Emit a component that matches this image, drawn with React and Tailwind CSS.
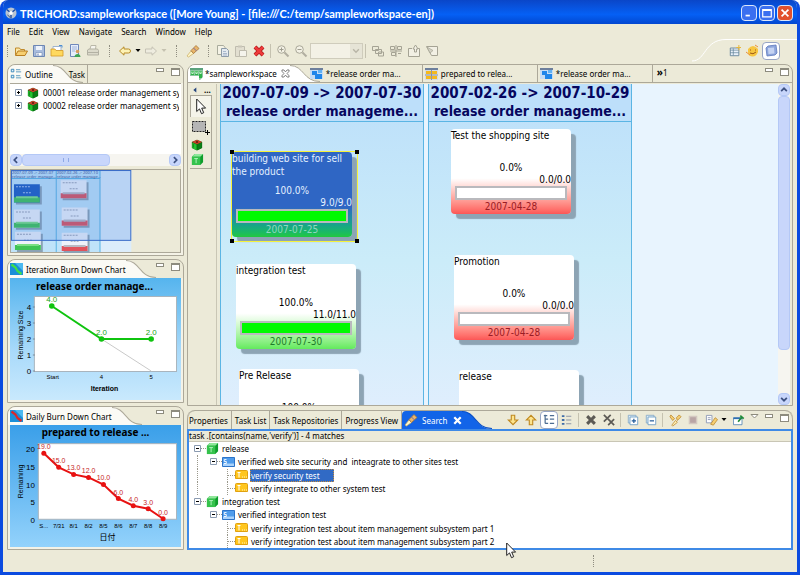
import { useState } from "react";
import clsx from "clsx";

/* ---------- small icons ---------- */

function Svg({ s = 14, children, className, vb = "0 0 14 14" }) {
  return (
    <svg width={s} height={s} viewBox={vb} fill="none" className={clsx("shrink-0", className)} aria-hidden="true">
      {children}
    </svg>
  );
}

const Folder = () => (
  <Svg>
    <path d="M1.500 11V4h4l1 1.500h4V7" fill="#fbe7a6" stroke="#c08a2c" />
    <path d="M1.500 11.500 4 7h9.500L11 11.500Z" fill="#f7cf70" stroke="#b97f22" />
  </Svg>
);
const Save = () => (
  <Svg>
    <path d="M1.500 1.500h11v11h-11z" fill="#a9bcdc" stroke="#6c86b4" />
    <path d="M4 2h6v4H4z" fill="#eef3fb" />
    <path d="M4 8.500h6V12H4z" fill="#fff" stroke="#6c86b4" strokeWidth=".6" />
    <path d="M6 9.500v2" stroke="#5672a6" />
  </Svg>
);
const OpenFile = () => (
  <Svg>
    <path d="M3 2.500h8V7H3z" fill="#fff" stroke="#9eb3cf" />
    <path d="M1 5h4l1 1.500h7V12H1z" fill="#ffd95e" stroke="#d69a24" strokeWidth=".8" />
    <path d="M9 1.500h3v2" stroke="#4a8fd6" />
  </Svg>
);
const DocUser = () => (
  <Svg>
    <path d="M2.500.500h8v12h-8z" fill="#e6edfa" stroke="#6f88bb" />
    <path d="M4 3h5M4 5h5M4 7h3" stroke="#8ea5d3" strokeWidth=".8" />
    <circle cx="9.500" cy="7.500" r="1.800" fill="#d99c5c" />
    <path d="M6.500 13c0-4 6-4 6 0Z" fill="#3fa453" />
  </Svg>
);
const Printer = () => (
  <Svg>
    <path d="M4 5 5 1.500h5L9.500 5" fill="#f6f5ee" stroke="#b9b7a8" />
    <path d="M1.500 6 3 5h8.500l1 1.500V11h-11z" fill="#dcdacb" stroke="#b3b1a3" />
    <path d="M2 8.500h10" stroke="#b3b1a3" />
  </Svg>
);
const Back = () => (
  <Svg>
    <path d="M1.500 7 6 2.800V5h4.500q2 0 2 2t-2 2H6v2.200Z" fill="#fdf2b4" stroke="#b78b28" />
  </Svg>
);
const Forward = () => (
  <Svg>
    <path d="M12.500 7 8 2.800V5H1.500v4H8v2.200Z" fill="#eeecdf" stroke="#c5c2b4" />
  </Svg>
);
const Torch = () => (
  <Svg>
    <path d="m1 12 4-5 2.500 2.500-5 3.500Z" fill="#fff7c7" stroke="#c8aa60" strokeWidth=".7" />
    <path d="m5 6.500 5-5 3 3-5.500 5Z" fill="#e9b66a" stroke="#a57438" strokeWidth=".8" />
    <path d="m7.500 4 2.800 2.800" stroke="#7a6aa8" />
  </Svg>
);
const Copy = () => (
  <Svg>
    <path d="M1.500 1.500h6l1.500 2v7H1.500z" fill="#f5f3e6" stroke="#a9ab9c" />
    <path d="M5.500 4.500h5l2 2v6h-7z" fill="#e4eaf0" stroke="#8c9aa8" />
    <path d="M7 7.500h3M7 9.500h4M7 11h4" stroke="#8fa2bd" strokeWidth=".7" />
  </Svg>
);
const Paste = () => (
  <Svg>
    <path d="M1.500 2.500h9v10h-9z" fill="#e2dfd0" stroke="#bfbcae" />
    <path d="M4 1.500h4v2H4z" fill="#c9c6b8" />
    <path d="M5.500 6.500h7v6h-7z" fill="#f5f4ec" stroke="#bfbcae" />
  </Svg>
);
const RedX = () => (
  <Svg>
    <path d="m3 3 8 8m0-8-8 8" stroke="#a81818" strokeWidth="4" />
    <path d="m3 3 8 8m0-8-8 8" stroke="#ee3a3a" strokeWidth="2.600" />
  </Svg>
);
const Zoomer = ({ plus }) => (
  <Svg>
    <circle cx="5.500" cy="5.500" r="3.800" fill="#f3f1e5" stroke="#a9a798" />
    <path d={plus ? "M3.500 5.500h4m-2-2v4" : "M3.500 5.500h4"} stroke="#a09e90" />
    <path d="m8.500 8.500 4 4" stroke="#b1aea0" strokeWidth="2" />
  </Svg>
);
const Layers = () => (
  <Svg>
    <path d="M1.500 2.500h6v4h-6zM4.500 5.500h6v4h-6zM7.500 8h5v4h-5z" fill="#ecead8" stroke="#a5a394" />
  </Svg>
);
const Arrange = () => (
  <Svg>
    <path d="M1.500 2.500h4v3h-4zM8.500 2.500h4v3h-4zM2.500 8.500h4v3h-4zM7 1v12M1 7h12M9 9.500h3" stroke="#a5a394" />
  </Svg>
);
const Inbox = () => (
  <Svg>
    <path d="M5 4.500H1.500v8h11v-8H11" fill="#f2f0e4" stroke="#a5a394" />
    <path d="M7.500 8V5H6l2.500-4L11 5H9.500v3Z" fill="#f2f0e4" stroke="#a5a394" />
  </Svg>
);
const Note = () => (
  <Svg>
    <path d="M1.500 2.500h11v9h-6z" fill="#f2f0e4" stroke="#a5a394" />
    <path d="m2 3 3 6 3-2.500Z" fill="#d4d2c4" stroke="#a5a394" strokeWidth=".7" />
  </Svg>
);

const Cube = ({ s = 12 }) => (
  <Svg s={s}>
    <path d="m7 1 6 2.500v7L7 13.500l-6-3v-7Z" fill="#0a6d12" />
    <path d="M7 1 13 3.500 7 6 1 3.500Z" fill="#c8412a" />
    <path d="m1.500 4.500 5 2v6.500l-5-2.500Z" fill="#25c431" />
    <path d="m7.500 6.500 5-2v6l-5 2.500Z" fill="#0a7d16" />
    <circle cx="7" cy="3.500" r="1.300" fill="#5d1f12" />
    <path d="M3 6v4" stroke="#127d1c" />
  </Svg>
);
const GreenBox = ({ s = 13 }) => (
  <Svg s={s}>
    <path d="m1 4 3-3h9v9l-3 3H1Z" fill="#0f9d2c" />
    <path d="m1 4 3-3h9l-3 3Z" fill="#8fe79a" />
    <path d="M1 4h9v9H1z" fill="#35c24c" />
    <path d="M3.500 6h4m-2 0v5" stroke="#b4f5bf" />
  </Svg>
);
const StoryIcon = () => (
  <svg width="13" height="10" viewBox="0 0 13 10" className="shrink-0" aria-hidden="true">
    <path d="M.500.500h12v9H.500z" fill="#4f9cec" stroke="#2d74c9" />
    <path d="M5 6.500h7V9H1V6.500Z" fill="#a9d2fb" />
    <path d="M4.500 2.500H2.300v2h2v2H2" fill="none" stroke="#fff" strokeWidth=".9" />
  </svg>
);
const TaskIcon = () => (
  <svg width="13" height="10" viewBox="0 0 13 10" className="shrink-0" aria-hidden="true">
    <path d="M.500 1.500q0-1 1-1h10q1 0 1 1v7h-12Z" fill="#ffc61e" stroke="#e0a110" />
    <path d="M2.500 2.500h3M4 2.500v5" stroke="#fff" />
    <path d="M7 7h1m1 0h1m1 0h1" stroke="#fff3bf" />
  </svg>
);
const BoardIcon = () => (
  <svg width="13" height="12" viewBox="0 0 13 12" className="shrink-0" aria-hidden="true">
    <path d="M0 0h13v9l-3 3H9V8H0z" fill="#8cc6a0" />
    <path d="M0 0h13v2H0z" fill="#5aa27c" />
    <path d="M1 3h3v4H1zM5 3h3v4H5zM9 3h3v7H9z" fill="#2eb348" />
    <path d="M1.800 3.500v2h1.400v-2M5.800 3.500v2h1.400v-2M9.800 3.500v2h1.400v-2" stroke="#e4ffe9" strokeWidth=".8" fill="none" />
  </svg>
);
const BlueBoard = () => (
  <svg width="13" height="12" viewBox="0 0 13 12" className="shrink-0" aria-hidden="true">
    <path d="M0 0h13v2H0z" fill="#6d7f9c" />
    <path d="M0 2h13v9H0z" fill="#c4dcf5" />
    <path d="M2 3h5v4H2zM5 6h7v5H5z" fill="#1f86ea" />
    <path d="M8 2h4v3H8z" fill="#60b1f5" />
  </svg>
);
const YellowBoard = () => (
  <svg width="13" height="12" viewBox="0 0 13 12" className="shrink-0" aria-hidden="true">
    <path d="M0 0h13v2H0z" fill="#6d7f9c" />
    <path d="M0 2h13v10H0z" fill="#d5dbe4" />
    <path d="M1 3h5v3H1zM7 3h5v3H7zM1 8h5v3H1zM7 8h5v3H7z" fill="#f5b91d" />
    <path d="M6.500 2v10M0 7h13" stroke="#7d8794" strokeWidth=".8" />
  </svg>
);
const OutlineIcon = () => (
  <Svg s={12}>
    <path d="M1.500 1.500h3v3h-3zM1.500 8.500h3v3h-3z" fill="#dff0fb" stroke="#2c7fb4" />
    <path d="M7 2h5M7 4.500h6M7 9h5M7 11.500h6" stroke="#4a8fb8" />
  </Svg>
);
const BurnIcon = ({ line }) => (
  <svg width="13" height="12" viewBox="0 0 13 12" className="shrink-0" aria-hidden="true">
    <path d="M0 0h13v12H0z" fill="#1a8fd8" />
    <path d="M5 0h8v8Z" fill="#4cb9f0" />
    <path d="m1.500 1.500 4 3 2 3.500 4 3" fill="none" stroke={line} strokeWidth="2.200" />
  </svg>
);
const MinMax = () => (
  <div className="flex items-start gap-[7px] pr-[3px] pt-[3px]">
    <button aria-label="Minimize view" className="h-1 w-2 border border-[#8d8b7e] bg-white" />
    <button aria-label="Maximize view" className="h-2 w-[9px] border border-t-2 border-[#8d8b7e] bg-white" />
  </div>
);

/* ---------- chrome ---------- */

function Curve({ from = "#ffffff", stroke = "#aca899" }) {
  return (
    <svg width="30" height="17" viewBox="0 0 30 17" preserveAspectRatio="none" className="h-full w-[30px] shrink-0" aria-hidden="true">
      <path d="M0 0C14 0 13 17 30 17H0Z" fill={from} />
      <path d="M0 .5C14 .5 13 16.500 30 16.500" fill="none" stroke={stroke} />
    </svg>
  );
}

function Panel({ icon, title, extra, children, className }) {
  return (
    <section className={clsx("flex min-h-0 flex-col rounded-t-lg border border-[#aca899]", className)}>
      <div className="flex h-[18px] shrink-0 items-stretch justify-between">
        <div className="flex items-stretch">
          <h2 className="flex items-center gap-[3px] rounded-tl-lg bg-[#fbfaf5] pl-0.5 whitespace-nowrap">
            {icon}
            {title}
          </h2>
          <Curve from="#fbfaf5" />
          {extra}
        </div>
        <MinMax />
      </div>
      <div className="flex min-h-0 flex-1 flex-col border-2 border-t-0 border-[#f4f2e6]">{children}</div>
    </section>
  );
}

const Handle = ({ className }) => (
  <span className={clsx("flex shrink-0 justify-center", className)}>
    <span className="h-3 border-l border-dotted border-[#8f8d80]" />
  </span>
);
const Sep = () => <span className="mr-[3px] ml-0.5 h-3.5 w-px shrink-0 bg-[#c5c2b0]" />;
const Drop = ({ dim, className }) => (
  <svg width="8" height="4" viewBox="0 0 8 4" className={clsx("shrink-0", className)} aria-hidden="true">
    <path d="M1.500 0h5L4 3Z" fill={dim ? "#c5c2b0" : "#000"} />
  </svg>
);

function Tool({ label, children, pressed }) {
  return (
    <button
      aria-label={label}
      className={clsx(
        "flex h-[18px] w-[18px] shrink-0 items-center justify-center",
        pressed && "rounded-sm border border-[#98a5c4] bg-white"
      )}
    >
      {children}
    </button>
  );
}

function TitleBar() {
  const btn = "flex h-4 w-4 items-center justify-center rounded-sm border border-[#dbe6fb]";
  return (
    <header className="flex h-6 shrink-0 items-center justify-between bg-linear-to-b from-[#0a46c8] via-[#0560f5] via-60% to-[#0348d0] pr-1 pl-0.5">
      <div className="flex items-center gap-[3px] pt-0.5">
        <Svg s={12}>
          <circle cx="7" cy="7" r="6.500" fill="#b8c4d2" />
          <path d="M7 7 2 3M7 7l5-4M7 7v6" stroke="#1b4aa0" strokeWidth="1.600" />
          <circle cx="7" cy="7" r="2.200" fill="#fff" />
          <path d="M3 9q2 3 3 3" stroke="#3c4f6a" />
        </Svg>
        <h1 className="font-[Lato,sans-serif] text-[11px] font-bold whitespace-nowrap text-white">
          TRICHORD:sampleworkspace ([More Young] - [file:///C:/temp/sampleworkspace-en])
        </h1>
      </div>
      <div className="flex gap-0.5 pt-0.5">
        <button aria-label="Minimize" className={clsx(btn, "bg-[#3a6ff0]")}>
          <Svg s={12}><path d="M3 10h5" stroke="#fff" strokeWidth="2" /></Svg>
        </button>
        <button aria-label="Maximize" className={clsx(btn, "bg-[#3a6ff0]")}>
          <Svg s={12}><path d="M2 3h10v8.500H2zM2 4h10" stroke="#fff" strokeWidth="1.400" /></Svg>
        </button>
        <button aria-label="Close" className={clsx(btn, "bg-[#e2502c]")}>
          <Svg s={12}><path d="m3 3 8 8m0-8-8 8" stroke="#fff" strokeWidth="2" /></Svg>
        </button>
      </div>
    </header>
  );
}

const menus = ["File", "Edit", "View", "Navigate", "Search", "Window", "Help"];

function Toolbar() {
  return (
    <div className="flex h-[23px] shrink-0 items-center justify-between">
      <div className="flex items-center">
        <Handle className="w-[9px]" />
        <Tool label="Open"><Folder /></Tool>
        <Tool label="Save"><Save /></Tool>
        <Tool label="Open file"><OpenFile /></Tool>
        <Tool label="User report"><DocUser /></Tool>
        <Tool label="Print"><Printer /></Tool>
        <Handle className="w-3.5" />
        <Tool label="Back"><Back /></Tool>
        <Drop />
        <Tool label="Forward"><Forward /></Tool>
        <Drop dim />
        <Handle className="w-4" />
        <Tool label="Find"><Torch /></Tool>
        <Handle className="w-3" />
        <Tool label="Copy"><Copy /></Tool>
        <Tool label="Paste"><Paste /></Tool>
        <Tool label="Delete"><RedX /></Tool>
        <Sep />
        <Tool label="Zoom in"><Zoomer plus /></Tool>
        <Tool label="Zoom out"><Zoomer /></Tool>
        <div className="relative flex">
          <select aria-label="Zoom level" disabled className="h-4 w-[53px] appearance-none border border-[#cfccbc] bg-[#f3f1e6]" />
          <span className="pointer-events-none absolute inset-y-px right-px flex w-3 items-center justify-center bg-[#e6e4d6]">
            <Svg s={8}><path d="m2 4 5 5 5-5" stroke="#b8b5a6" strokeWidth="2.500" /></Svg>
          </span>
        </div>
        <Sep />
        <Tool label="Layers"><Layers /></Tool>
        <Tool label="Arrange"><Arrange /></Tool>
        <Tool label="Check in"><Inbox /></Tool>
        <Tool label="Note"><Note /></Tool>
      </div>
      <div className="flex h-full items-center">
        <svg width="34" height="23" viewBox="0 0 34 23" fill="none" className="mr-0.5" aria-hidden="true">
          <path d="M0 22C14 22 12 .5 34 .5" stroke="#fff" />
        </svg>
        <div className="-ml-0.5 flex h-full items-center border-t border-white pr-[17px]">
          <Tool label="Open perspective">
            <Svg s={12}>
              <path d="M1.500 3.500h10v9h-10z" fill="#e9f1fa" stroke="#5d7f96" />
              <path d="M1.500 6h10M5 4v8M1.500 9h10" stroke="#5d7f96" strokeWidth=".8" />
              <path d="M11.500 0v6M8.500 3h6" stroke="#e8b83c" strokeWidth="1.200" />
            </Svg>
          </Tool>
          <Tool label="Resource perspective">
            <Svg>
              <path d="M2 5q5-6 10 0v3q-2 5-6 4.500T2 8Z" fill="#f7c642" />
              <path d="M4 6h1m4 0h1M4 9q3 2 6-1" stroke="#9d5b17" />
              <path d="m9 1 3 2M0 8l4 3" stroke="#e98f37" />
            </Svg>
          </Tool>
          <Tool label="Planning perspective" pressed>
            <Svg>
              <path d="m4 2 8-1 1 8-2 2-8 1-1-8Z" fill="#8ea6dc" stroke="#5d79bd" strokeWidth=".8" />
              <path d="m4 4 6-.500.500 6-6 .500Z" fill="#c5d3f2" />
            </Svg>
          </Tool>
        </div>
      </div>
    </div>
  );
}

/* ---------- left side ---------- */

const projects = [
  "00001 release order management system",
  "00002 release order management system",
];

const Plus = ({ minus }) => (
  <svg width="7" height="7" viewBox="0 0 7 7" className="shrink-0" aria-hidden="true">
    <path d="M.500.500h6v6h-6z" fill="#fff" stroke="#8a9ab0" />
    <path d={minus ? "M2 3.500h3" : "M2 3.500h3M3.500 2v3"} stroke="#000" />
  </svg>
);

const thumbCards = [
  [14, 186, "done", true],
  [14, 211, "done"],
  [15, 233, "done"],
  [61, 182, "late"],
  [62, 209, "late"],
  [62, 234, "late"],
];

function Thumbnail() {
  return (
    <svg viewBox="10 171 172 83" preserveAspectRatio="none" className="mt-[3px] h-[84px] w-full shrink-0" role="img" aria-label="Diagram overview">
      <rect x="10.500" y="171.500" width="171" height="82" fill="#ecead8" stroke="#aca899" />
      <rect x="11" y="172" width="121" height="81" fill="#dcedfb" />
      <rect x="11" y="172" width="90" height="81" fill="#bfe3f9" />
      <path d="M56.500 172v81M100.500 172v81M11 180.500h90" stroke="#5bb5e4" />
      <g fontSize="4" fill="#3c4f8e">
        <text x="12" y="175.500">2007-07-09 -&gt; 2007-07</text>
        <text x="12" y="179.500">release order manage...</text>
        <text x="57" y="175.500">2007-02-26 -&gt; 2007-10</text>
        <text x="57" y="179.500">release order manage...</text>
      </g>
      {thumbCards.map(([x, y, kind, sel]) => (
        <g key={`${x}-${y}`}>
          <path d={`M${x + 2} ${y + 2}h26v18h-26z`} fill="#8ba2b4" />
          <path d={`M${x} ${y}h26v18h-26z`} fill={sel ? "#1d5cc0" : "#eef2fa"} />
          <path d={`M${x} ${y + 13}h26v5h-26z`} fill={kind === "done" ? "#3fc455" : "#e0525c"} />
          <path d={`M${x + 2} ${y + 12}h22v2h-22z`} fill={kind === "done" ? "#7be083" : "#b9b9c2"} />
          <path d={`M${x + 2} ${y + 2.500}h14M${x + 9} ${y + 8.500}h8`} stroke={sel ? "#a9c5f2" : "#9aa3b5"} strokeDasharray="2 1" />
        </g>
      ))}
      <rect x="11.500" y="172.500" width="120" height="69" fill="#3a78dc" fillOpacity=".22" stroke="#3a6cc8" />
    </svg>
  );
}

function ScrollArrow({ d, className, label }) {
  return (
    <button aria-label={label} className={clsx("flex shrink-0 items-center justify-center rounded-sm border border-[#b4c8f6] bg-[#c8d6fb]", className)}>
      <Svg s={8}><path d={d} stroke="#3c5080" strokeWidth="3" /></Svg>
    </button>
  );
}

function OutlinePanel() {
  return (
    <Panel
      className="flex-1"
      icon={<OutlineIcon />}
      title="Outline"
      extra={<button className="-ml-4 border-r border-[#aca899] px-0.5">Task</button>}
    >
      <div className="flex min-h-0 flex-1 flex-col border-t border-[#aca899] bg-white">
        <ul className="flex-1 pt-0.5 pr-0.5 pl-[5px]">
          {projects.map((p) => (
            <li key={p} className="flex h-[13px] items-center gap-[5px] overflow-hidden whitespace-nowrap">
              <Plus />
              <Cube />
              <span className="-ml-px overflow-hidden">{p}</span>
            </li>
          ))}
        </ul>
        <div className="flex h-3 shrink-0 bg-[#f6f5f0]">
          <ScrollArrow label="Scroll left" d="M9 2 4 7l5 5" className="w-3" />
          <div className="flex w-[88px] items-center justify-center rounded-sm border border-[#b4c8f6] bg-[#c8d6fb]">
            <span className="h-1 w-1.5 border-x border-[#8fa9e6]" />
          </div>
          <span className="flex-1" />
          <ScrollArrow label="Scroll right" d="m5 2 5 5-5 5" className="w-3" />
        </div>
      </div>
      <Thumbnail />
    </Panel>
  );
}

function IterationChart() {
  const pts = [[52, 308, "4.0"], [102, 341, "2.0"], [152, 341, "2.0"]];
  return (
    <svg viewBox="10 280 172 122" preserveAspectRatio="none" className="min-h-0 w-full flex-1" fontFamily="Liberation Sans, sans-serif" textAnchor="middle" role="img" aria-label="Iteration burn down">
      <defs>
        <linearGradient id="itr" x2="0" y2="1">
          <stop offset="0" stopColor="#55b4ee" />
          <stop offset=".6" stopColor="#a9dafa" />
          <stop offset="1" stopColor="#c9e9fd" />
        </linearGradient>
      </defs>
      <rect x="10" y="280" width="172" height="122" fill="url(#itr)" />
      <text x="95" y="292" fontSize="10" fontWeight="bold" fontFamily="Noto Sans, sans-serif">release order manage...</text>
      <rect x="34.500" y="298.500" width="143" height="75" fill="#fff" stroke="#a9b4bd" />
      <path d="m102 341 50 32" stroke="#c9c9c9" />
      <path d="m52 308 50 33h50" fill="none" stroke="#0fc40f" strokeWidth="2" />
      <g fontSize="8">
        {[4, 3, 2, 1, 0].map((n, i) => (
          <g key={n}>
            <text x="29" y={312 + i * 16}>{n}</text>
            <path d={`M33 ${309 + i * 16}h2`} stroke="#66727c" strokeWidth=".7" />
          </g>
        ))}
      </g>
      {pts.map(([x, y, v]) => (
        <g key={x}>
          <circle cx={x} cy={y} r="2.800" fill="#0fc40f" />
          <text x={x} y={y - 4} fontSize="8" fill="#17a317">{v}</text>
        </g>
      ))}
      <g fontSize="6">
        <text x="53" y="381">Start</text>
        <text x="102" y="381">4</text>
        <text x="152" y="381">5</text>
      </g>
      <text x="105" y="393" fontSize="7" fontWeight="bold">Iteration</text>
      <text transform="translate(23 337) rotate(-90)" fontSize="7">Remaining Size</text>
    </svg>
  );
}

const daily = [
  [44, 455, "19.0", "S..."],
  [59, 469, "15.0", "7/31"],
  [74, 476, "13.0", "8/1"],
  [89, 479, "12.0", "8/2"],
  [104, 486, "10.0", "8/5"],
  [119, 500, "6.0", "8/6"],
  [134, 507, "4.0", "8/7"],
  [149, 510, "3.0", "8/8"],
  [164, 520, "0.0", "8/9"],
];

function DailyChart() {
  return (
    <svg viewBox="10 427 172 121" preserveAspectRatio="none" className="min-h-0 w-full flex-1" fontFamily="Liberation Sans, sans-serif" textAnchor="middle" role="img" aria-label="Daily burn down">
      <defs>
        <linearGradient id="day" x2="0" y2="1">
          <stop offset="0" stopColor="#3a9fe9" />
          <stop offset="1" stopColor="#93d2fb" />
        </linearGradient>
      </defs>
      <rect x="10" y="427" width="172" height="121" fill="url(#day)" />
      <text x="96" y="438" fontSize="10" fontWeight="bold" fontFamily="Noto Sans, sans-serif">prepared to release ...</text>
      <rect x="38.500" y="445.500" width="139" height="75" fill="#fff" stroke="#a9b4bd" />
      <g fontSize="8" textAnchor="end">
        {[20, 15, 10, 5, 0].map((n, i) => (
          <text key={n} x="35" y={454 + i * 17.5}>{n}</text>
        ))}
      </g>
      <polyline points={daily.map(([x, y]) => `${x},${y}`).join(" ")} fill="none" stroke="#e81212" strokeWidth="2" />
      {daily.map(([x, y, v, d]) => (
        <g key={x}>
          <circle cx={x} cy={y} r="2.500" fill="#e81212" />
          <text x={x} y={y - 4} fontSize="7" fill="#c62626">{v}</text>
          <text x={x} y="529" fontSize="6">{d}</text>
        </g>
      ))}
      <text x="108" y="541" fontSize="8" fontFamily="Noto Sans CJK JP, sans-serif">日付</text>
      <text transform="translate(23 483) rotate(-90)" fontSize="7">Remaining</text>
    </svg>
  );
}

/* ---------- editor ---------- */

const editorTabs = [
  { icon: <BlueBoard />, label: "*release order ma..." },
  { icon: <YellowBoard />, label: "prepared to relea..." },
  { icon: <BlueBoard />, label: "*release order ma..." },
];

const cardKinds = {
  selected: "bg-linear-to-b from-[#2f66c4] from-65% to-[#22c83c] text-[#e3f0ff]",
  done: "bg-linear-to-b from-white from-58% to-[#62ea5c] text-black",
  late: "bg-linear-to-b from-white from-58% to-[#fb5656] text-black",
};
const dateKinds = { selected: "text-[#8fd8c0]", done: "text-[#1f7a2a]", late: "text-[#9a1c24]" };

function Card({ title, pct, size, date, kind }) {
  const done = kind !== "late";
  return (
    <div className={clsx("flex h-[85px] w-[120px] flex-col rounded text-[10px] shadow-[5px_5px_1px_#8da4b4]", cardKinds[kind])}>
      <p className="h-[33px] leading-[13px]">{title}</p>
      <p className="h-3 text-center leading-3">{pct}</p>
      <p className="h-3 text-right leading-3">{size}</p>
      <div className={clsx("mx-1 h-3.5 border-2 border-[#b9b9bd]", done ? "bg-[#00fa00]" : "bg-white")} />
      <p className={clsx("text-center leading-[14px]", dateKinds[kind])}>{date}</p>
    </div>
  );
}

function Lane({ dates, name, children }) {
  return (
    <div className="relative w-[204px] shrink-0 border-x border-[#5bb5e4] bg-linear-to-b from-[#bcdffa] via-[#cbecf9] via-55% to-[#dfeefd]">
      <h3 className="flex h-[38px] flex-col items-center border-b border-[#5bb5e4] bg-[#bddffa] leading-[18px] font-bold whitespace-nowrap text-[#06065e]">
        <span className="text-[15px]">{dates}</span>
        <span className="text-[14px]">{name}</span>
      </h3>
      {children}
    </div>
  );
}

function Palette() {
  return (
    <div className="flex w-[29px] shrink-0 flex-col border-r border-[#c9c6b5] pl-0.5">
      <div className="flex h-[11px] items-center gap-1.5 pl-0.5">
        <Svg s={6}><path d="M10 1v12L3 7Z" fill="#24457e" /></Svg>
        <span className="leading-none font-bold">...</span>
      </div>
      <div className="mr-1 flex flex-col items-start border-r border-b border-[#aca899] pb-0.5">
        <button aria-label="Select" className="flex h-[22px] w-full items-center border-t border-l border-[#aca899] bg-[#f5f4ea] pl-[5px]">
          <Pointer />
        </button>
        <button aria-label="Marquee" className="mt-0.5 h-[18px] pl-0.5">
          <svg width="18" height="16" viewBox="0 0 18 16" aria-hidden="true">
            <path d="M.500 1.500h13v10H.500z" fill="#b5b5b5" stroke="#222" strokeDasharray="2 1" />
            <path d="M15.500 10v5M13 12.500h5" stroke="#000" />
          </svg>
        </button>
        <button aria-label="Project" className="mt-0.5 pl-px"><Cube /></button>
        <button aria-label="Release" className="mt-0.5 pl-px"><GreenBox /></button>
      </div>
    </div>
  );
}

function Pointer() {
  return (
    <svg width="11" height="17" viewBox="0 0 11 17" aria-hidden="true">
      <path d="M.700 1v12.500l2.800-2.600 2 4.800 2.200-1-2-4.600h3.900Z" fill="#fff" stroke="#222" />
    </svg>
  );
}

function Editor() {
  return (
    <section className="flex min-h-0 flex-1 flex-col overflow-hidden rounded-t-lg border border-[#aca899]">
      <div className="flex h-[18px] shrink-0 items-stretch border-b border-[#aca899]">
        <div className="flex items-center gap-0.5 bg-white pl-0.5 whitespace-nowrap">
          <BoardIcon />
          *sampleworkspace
          <button aria-label="Close editor" className="ml-0.5">
            <Svg s={9}><path d="M1.500 1.500h3L7 4.500l2.500-3h3v2L9.500 7l3 3.500v2h-3L7 9.500l-2.500 3h-3v-2L4.500 7l-3-3.500Z" stroke="#666" strokeWidth="1.300" /></Svg>
          </button>
        </div>
        <Curve />
        {editorTabs.map((t, i) => (
          <button key={i} className={clsx("flex w-[115px] shrink-0 items-center gap-[3px] border-r border-[#aca899] pl-0.5 whitespace-nowrap", i === 0 && "-ml-3")}>
            {t.icon}
            {t.label}
          </button>
        ))}
        <span className="pl-1 leading-[14px]"><b className="text-[10px]">»</b>1</span>
        <span className="flex-1" />
        <MinMax />
      </div>
      <div className="mt-px flex min-h-0 flex-1 pr-0.5">
        <Palette />
        <div className="relative ml-[3px] flex min-w-0 flex-1 gap-1 overflow-hidden bg-[#e8f4fe] font-['DejaVu_Sans_Condensed','DejaVu_Sans',sans-serif]">
          <Lane dates="2007-07-09 -> 2007-07-30" name="release order manageme...">
            <div className="absolute top-[68px] left-[11px]">
              <Card title="building web site for sell the product" pct="100.0%" size="9.0/9.0" date="2007-07-25" kind="selected" />
            </div>
            <div className="absolute top-[67px] left-[10px] h-[91px] w-[127px] border border-[#f6f23a]">
              <i className="absolute -top-0.5 -left-0.5 h-1 w-1 bg-black" />
              <i className="absolute -top-0.5 -right-0.5 h-1 w-1 bg-black" />
              <i className="absolute -bottom-0.5 -left-0.5 h-1 w-1 bg-black" />
              <i className="absolute -right-0.5 -bottom-0.5 h-1 w-1 bg-black" />
            </div>
            <div className="absolute top-[180px] left-[15px]">
              <Card title="integration test" pct="100.0%" size="11.0/11.0" date="2007-07-30" kind="done" />
            </div>
            <div className="absolute top-[285px] left-[18px]">
              <Card title="Pre Release" pct="100.0%" kind="done" />
            </div>
          </Lane>
          <Lane dates="2007-02-26 -> 2007-10-29" name="release order manageme...">
            <div className="absolute top-[45px] left-[22px]">
              <Card title="Test the shopping site" pct="0.0%" size="0.0/0.0" date="2007-04-28" kind="late" />
            </div>
            <div className="absolute top-[171px] left-[25px]">
              <Card title="Promotion" pct="0.0%" size="0.0/0.0" date="2007-04-28" kind="late" />
            </div>
            <div className="absolute top-[286px] left-[30px]">
              <Card title="release" kind="late" />
            </div>
          </Lane>
        </div>
        <div className="flex w-3 shrink-0 flex-col bg-[#f6f5f0]">
          <ScrollArrow label="Scroll up" d="m2 9 5-5 5 5" className="h-3" />
          <div className="flex-1 rounded-sm border border-[#b4c8f6] bg-[#c8d6fb]" />
          <div className="h-[43px]" />
          <ScrollArrow label="Scroll down" d="m2 5 5 5 5-5" className="h-3" />
        </div>
      </div>
    </section>
  );
}

/* ---------- search view ---------- */

const results = [
  { level: 0, text: "release" },
  { level: 1, text: "verified web site security and  inteagrate to other sites test", more: true },
  { level: 2, text: "verify security test", more: true },
  { level: 2, text: "verify integrate to other system test", more: true },
  { level: 0, text: "integration test" },
  { level: 1, text: "verified integration test" },
  { level: 2, text: "verify integration test about item management subsystem part 1" },
  { level: 2, text: "verify integration test about item management subsystem part 2" },
];
const indent = ["", "w-[13px]", "w-[30px]"];

function ResultRow({ row, selected, onSelect }) {
  return (
    <li className={clsx("flex flex-1 items-center whitespace-pre", row.level === 0 ? "pl-[5px]" : "pl-2")}>
      {row.level > 0 && (
        <span className={clsx("self-stretch border-l border-dotted", indent[row.level], row.more ? "border-[#9a988c]" : "border-transparent")} />
      )}
      {row.level < 2 ? (
        <>
          <Plus minus />
          <span className="w-[5px] border-t border-dotted border-[#9a988c]" />
        </>
      ) : (
        <span className="flex w-2 items-center self-stretch border-l border-dotted border-[#9a988c]">
          <span className="w-full border-t border-dotted border-[#9a988c]" />
        </span>
      )}
      {row.level === 0 && <GreenBox />}
      {row.level === 1 && <StoryIcon />}
      {row.level === 2 && <TaskIcon />}
      <button onClick={onSelect} className={clsx("ml-0.5 h-[13px] pl-px leading-[13px]", selected && "bg-[#316ac5] pr-3.5 text-white outline-1 -outline-offset-1 outline-dotted outline-[#c98d3a]")}>
        {row.text}
      </button>
    </li>
  );
}

const YellowArrow = ({ up }) => (
  <Svg s={12} className={up ? "rotate-180" : ""}>
    <path d="M5 1.500h4V7h3.500L7 12.500 1.500 7H5Z" fill="#fde48c" stroke="#c08a22" strokeWidth="1.300" />
  </Svg>
);
const GrayX = ({ twice }) => (
  <Svg s={12}>
    <path d={twice ? "m1 1 8 8m0-8-8 8M6 6l7 7m0-7-7 7" : "m2.500 2.500 9 9m0-9-9 9"} stroke="#5c5a55" strokeWidth={twice ? 2 : 3.500} />
  </Svg>
);
const BoxSign = ({ plus }) => (
  <Svg s={12}>
    <path d="M1.500 1.500h9v9h-9z" fill="#dcecf8" stroke="#86a9c6" />
    <path d="M3.500 3.500h9v9h-9z" fill="#fff" stroke="#6b9cc2" />
    <path d={plus ? "M5.500 8h5M8 5.500v5" : "M5.500 8h5"} stroke="#1f5a9a" strokeWidth="1.400" />
  </Svg>
);

function SearchView() {
  const [selected, setSelected] = useState(2);
  return (
    <section className="flex h-[140px] shrink-0 flex-col rounded-t-lg border-t border-[#aca899]">
      <div className="flex h-[18px] shrink-0 items-stretch justify-between rounded-t-lg border-x border-[#aca899]">
        <div className="flex items-stretch whitespace-nowrap">
          {["Properties", "Task List", "Task Repositories", "Progress View"].map((t) => (
            <button key={t} className="border-r border-[#aca899] px-[3px] first:pl-px">{t}</button>
          ))}
          <div className="flex items-center gap-1 rounded-tl bg-[#1264e8] pl-0.5 text-white">
            <Torch />
            Search
            <button aria-label="Close view" className="ml-0.5">
              <Svg s={9}><path d="m2 2 10 10M12 2 2 12" stroke="#fff" strokeWidth="3.500" /></Svg>
            </button>
          </div>
          <Curve from="#1264e8" stroke="#0b4fc4" />
        </div>
        <div className="flex items-center">
          <Tool label="Next match"><YellowArrow /></Tool>
          <Tool label="Previous match"><YellowArrow up /></Tool>
          <Tool label="Tree layout" pressed>
            <Svg s={12}><path d="M2.500 1v10M2.500 6H6M2.500 11H6M1 2h4M8 2h5M8 6h5M8 11h5" stroke="#4d6d93" strokeWidth="1.400" /></Svg>
          </Tool>
          <Tool label="List layout">
            <Svg s={12}><path d="M1 2.500h3M1 7h3M1 11.500h3" stroke="#3f6da8" strokeWidth="2.200" /><path d="M6 2.500h6M6 7h6M6 11.500h6" stroke="#8d97a6" strokeWidth="1.200" /></Svg>
          </Tool>
          <Sep />
          <Tool label="Remove"><GrayX /></Tool>
          <Tool label="Remove all"><GrayX twice /></Tool>
          <Sep />
          <Tool label="Expand all"><BoxSign plus /></Tool>
          <Tool label="Collapse all"><BoxSign /></Tool>
          <Sep />
          <Tool label="Search again">
            <Svg s={13}>
              <path d="m2 1 4 4-2 2-3-4ZM8 4l3-3 2 2-4 4Z" fill="#f6cf72" stroke="#b78328" strokeWidth=".8" />
              <path d="m3 12 4-5 2 2-5 4Z" fill="#fff0b3" stroke="#b78328" strokeWidth=".8" />
            </Svg>
          </Tool>
          <Tool label="Stop">
            <Svg s={10}><path d="M2 2h10v10H2z" fill="#b9a5a5" stroke="#d3c8c0" strokeWidth="2" /></Svg>
          </Tool>
          <Tool label="History">
            <Svg s={13}>
              <path d="M1.500 1.500h6v8h-6z" fill="#fff" stroke="#8f9bb5" />
              <path d="m6 11 5-7 2.500 2L9 12Z" fill="#f6cf72" stroke="#b78328" strokeWidth=".8" />
              <path d="M3 4h3M3 6h3" stroke="#8f9bb5" />
            </Svg>
          </Tool>
          <Drop className="mr-0.5" />
          <Tool label="Pin">
            <Svg s={12}>
              <path d="M.500 4.500h10v8H.500z" fill="#fff" stroke="#5688b4" />
              <path d="M.500 5h10" stroke="#2f6fb3" strokeWidth="2" />
              <path d="m6 9 4-5M8.500 2l4 3.500" stroke="#1f8c3a" strokeWidth="2" />
            </Svg>
          </Tool>
          <button aria-label="View menu" className="mx-0.5 self-start pt-[3px]">
            <svg width="9" height="6" viewBox="0 0 9 6"><path d="M1 .500h7L4.500 4Z" fill="#fff" stroke="#8d8b7e" /></svg>
          </button>
          <div className="self-start pl-1"><MinMax /></div>
        </div>
      </div>
      <div className="flex min-h-0 flex-1 flex-col border-2 border-[#3f8ae6] bg-white">
        <p className="h-[11px] shrink-0 border-b border-[#c9c6b5] bg-[#ecead8] leading-[10px]">
          task .[contains(name,&apos;verify&apos;)] - 4 matches
        </p>
        <ul className="flex flex-1 flex-col">
          {results.map((r, i) => (
            <ResultRow key={i} row={r} selected={i === selected} onSelect={() => setSelected(i)} />
          ))}
        </ul>
      </div>
    </section>
  );
}

export default function App() {
  return (
    <div className="relative flex h-screen flex-col overflow-hidden rounded-t-lg border-x-3 border-b-3 border-[#0b4be0] bg-[#ecead8] font-['Noto_Sans',sans-serif] text-[8px] leading-[13px] text-black">
      <TitleBar />
      <nav className="flex h-[15px] shrink-0 items-center gap-[9px] pl-1">
        {menus.map((m) => (
          <button key={m} className="text-[8px]">{m}</button>
        ))}
      </nav>
      <Toolbar />
      <main className="flex min-h-0 flex-1 gap-[3px] pt-0.5 pr-1 pl-1">
        <div className="flex w-[177px] shrink-0 flex-col gap-[3px]">
          <OutlinePanel />
          <Panel className="h-36 shrink-0" icon={<BurnIcon line="#3fe04a" />} title="Iteration Burn Down Chart">
            <IterationChart />
          </Panel>
          <Panel className="h-36 shrink-0" icon={<BurnIcon line="#d8282c" />} title="Daily Burn Down Chart">
            <DailyChart />
          </Panel>
        </div>
        <div className="flex min-w-0 flex-1 flex-col gap-1">
          <Editor />
          <SearchView />
        </div>
      </main>
      <footer className="flex h-[22px] shrink-0 items-center pl-[590px]">
        <Handle />
      </footer>
      <div className="pointer-events-none absolute top-[542px] left-[503px]">
        <Pointer />
      </div>
    </div>
  );
}
